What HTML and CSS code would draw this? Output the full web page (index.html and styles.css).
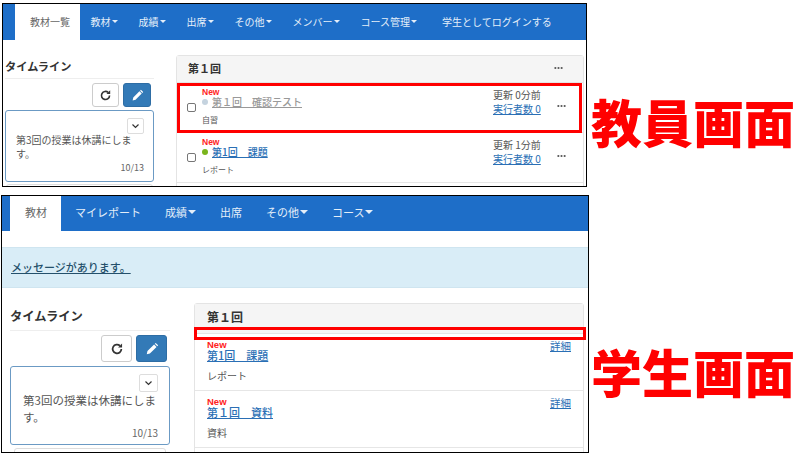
FILE: index.html
```html
<!DOCTYPE html>
<html lang="ja">
<head>
    <meta charset="UTF-8">
    <title>教員画面と学生画面</title>
    <link rel="stylesheet" href="styles.css">
</head>
<body>

    <!-- 教員画面 -->
    <div class="shot-row teacher-row">
        <div class="shot teacher">
            <nav class="navbar">
                <a class="tab active">教材一覧</a>
                <a class="tab">教材<i class="caret"></i></a>
                <a class="tab">成績<i class="caret"></i></a>
                <a class="tab">出席<i class="caret"></i></a>
                <a class="tab">その他<i class="caret"></i></a>
                <a class="tab">メンバー<i class="caret"></i></a>
                <a class="tab">コース管理<i class="caret"></i></a>
                <a class="tab login">学生としてログインする</a>
            </nav>
            <div class="layout">
                <aside class="sidebar">
                    <h2 class="side-title">タイムライン</h2>
                    <div class="side-btns">
                        <button class="btn">
                            <svg viewBox="0 0 16 16" class="btn-icon"><path d="M13 8a5 5 0 1 1-1.6-3.7" fill="none" stroke="#333" stroke-width="2"/><path d="M13.8 1.6v4.6H9.2z" fill="#333"/></svg>
                        </button>
                        <button class="btn btn-blue">
                            <svg viewBox="0 0 16 16" class="btn-icon"><path d="M2 14l.8-3.6 7.6-7.6 2.8 2.8-7.6 7.6zM11.2 2l1-1 2.8 2.8-1 1z" fill="#fff"/></svg>
                        </button>
                    </div>
                    <div class="note">
                        <div class="note-top">
                            <span class="chevron"><svg viewBox="0 0 12 8"><path d="M2 2l4 4 4-4" fill="none" stroke="#333" stroke-width="1.6"/></svg></span>
                        </div>
                        <p class="note-text">第3回の授業は休講にします。</p>
                        <div class="note-date">10/13</div>
                    </div>
                    <div class="note-next"></div>
                </aside>
                <main class="panel">
                    <div class="panel-head">
                        <span>第１回</span>
                        <svg viewBox="0 0 10 4" class="dots"><circle cx="1.5" cy="2" r="1.2"/><circle cx="5" cy="2" r="1.2"/><circle cx="8.5" cy="2" r="1.2"/></svg>
                    </div>
                    <div class="item">
                        <input type="checkbox" class="check">
                        <div class="item-main">
                            <div class="new">New</div>
                            <div class="item-title"><i class="dot dot-gray"></i><a class="title-off">第１回　確認テスト</a></div>
                            <div class="item-type">自習</div>
                        </div>
                        <div class="item-stat">
                            <div>更新 0分前</div>
                            <a>実行者数 0</a>
                        </div>
                        <svg viewBox="0 0 10 4" class="dots"><circle cx="1.5" cy="2" r="1.2"/><circle cx="5" cy="2" r="1.2"/><circle cx="8.5" cy="2" r="1.2"/></svg>
                    </div>
                    <div class="item">
                        <input type="checkbox" class="check">
                        <div class="item-main">
                            <div class="new">New</div>
                            <div class="item-title"><i class="dot dot-green"></i><a>第1回　課題</a></div>
                            <div class="item-type">レポート</div>
                        </div>
                        <div class="item-stat">
                            <div>更新 1分前</div>
                            <a>実行者数 0</a>
                        </div>
                        <svg viewBox="0 0 10 4" class="dots"><circle cx="1.5" cy="2" r="1.2"/><circle cx="5" cy="2" r="1.2"/><circle cx="8.5" cy="2" r="1.2"/></svg>
                    </div>
                </main>
            </div>
            <div class="red-box teacher-box"></div>
        </div>
        <div class="label">教員画面</div>
    </div>

    <!-- 学生画面 -->
    <div class="shot-row student-row">
        <div class="shot student">
            <nav class="navbar">
                <a class="tab active">教材</a>
                <a class="tab">マイレポート</a>
                <a class="tab">成績<i class="caret"></i></a>
                <a class="tab">出席</a>
                <a class="tab">その他<i class="caret"></i></a>
                <a class="tab">コース<i class="caret"></i></a>
            </nav>
            <div class="alert"><a>メッセージがあります。</a></div>
            <div class="layout">
                <aside class="sidebar">
                    <h2 class="side-title">タイムライン</h2>
                    <div class="side-btns">
                        <button class="btn">
                            <svg viewBox="0 0 16 16" class="btn-icon"><path d="M13 8a5 5 0 1 1-1.6-3.7" fill="none" stroke="#333" stroke-width="2"/><path d="M13.8 1.6v4.6H9.2z" fill="#333"/></svg>
                        </button>
                        <button class="btn btn-blue">
                            <svg viewBox="0 0 16 16" class="btn-icon"><path d="M2 14l.8-3.6 7.6-7.6 2.8 2.8-7.6 7.6zM11.2 2l1-1 2.8 2.8-1 1z" fill="#fff"/></svg>
                        </button>
                    </div>
                    <div class="note">
                        <div class="note-top">
                            <span class="chevron"><svg viewBox="0 0 12 8"><path d="M2 2l4 4 4-4" fill="none" stroke="#333" stroke-width="1.6"/></svg></span>
                        </div>
                        <p class="note-text">第3回の授業は休講にします。</p>
                        <div class="note-date">10/13</div>
                    </div>
                    <div class="note-next"></div>
                </aside>
                <main class="panel">
                    <div class="panel-head">
                        <span>第１回</span>
                    </div>
                    <div class="item">
                        <div class="item-main">
                            <div class="new">New</div>
                            <div class="item-title"><a>第1回　課題</a></div>
                            <div class="item-type">レポート</div>
                        </div>
                        <a class="detail">詳細</a>
                    </div>
                    <div class="item">
                        <div class="item-main">
                            <div class="new">New</div>
                            <div class="item-title"><a>第１回　資料</a></div>
                            <div class="item-type">資料</div>
                        </div>
                        <a class="detail">詳細</a>
                    </div>
                </main>
            </div>
            <div class="red-box student-box"></div>
        </div>
        <div class="label">学生画面</div>
    </div>

</body>
</html>
```

FILE: styles.css
```css
body {
    margin: 0;
    background-color: #fff;
    color: #555;
    font-family: "Noto Sans CJK JP", "Liberation Sans", sans-serif;
}
a {
    cursor: pointer;
}
p, h2 {
    margin: 0;
}

.shot-row {
    display: flex;
}
.teacher-row {
    padding: 3px 0 0 2px;
}
.student-row {
    padding: 8px 0 0 1px;
}
.shot {
    position: relative;
    box-sizing: border-box;
    border: 1px solid #000;
    overflow: hidden;
}
.teacher {
    width: 585px;
    height: 184px;
}
.student {
    width: 588px;
    height: 258px;
}
.label {
    color: #f00;
    font-size: 51px;
    font-weight: 900;
    line-height: 50px;
    white-space: nowrap;
}
.teacher-row .label {
    margin: 93px 0 0 4px;
}
.student-row .label {
    margin: 151px 0 0 2px;
}

/* ナビゲーション */
.navbar {
    display: flex;
    background-color: #1e6ec8;
    color: #e4eef9;
}
.tab {
    display: flex;
    align-items: center;
    white-space: nowrap;
}
.tab.active {
    background-color: #fff;
    color: #666;
}
.caret {
    width: 0;
    height: 0;
    margin-left: 1px;
    border-top: 3px solid #e4eef9;
    border-left: 3px solid transparent;
    border-right: 3px solid transparent;
}
.teacher .navbar {
    height: 36px;
    padding-left: 12px;
    font-size: 10px;
}
.teacher .tab {
    padding: 0 10.5px 2px;
}
.teacher .tab.active {
    padding: 0 10px 2px 15px;
}
.teacher .tab.login {
    margin-left: 4px;
}
.student .navbar {
    height: 35px;
    padding-left: 8px;
    font-size: 11px;
}
.student .tab {
    padding: 0 12px 4px;
}
.student .tab.active {
    padding: 0 14px 4px 15px;
    margin-right: 2px;
}
.student .caret {
    border-top-width: 4px;
    border-left-width: 4px;
    border-right-width: 4px;
}

.alert {
    box-sizing: border-box;
    height: 41px;
    margin-top: 16px;
    padding-left: 9px;
    background-color: #d9edf7;
    border-top: 1px solid #cfe5f0;
    border-bottom: 1px solid #cfe5f0;
    color: #24506b;
    font-size: 11px;
    font-weight: 500;
    line-height: 38px;
}
.alert a {
    text-decoration: underline;
}

.layout {
    display: flex;
    padding-top: 15px;
}

/* タイムライン */
.side-title {
    box-sizing: border-box;
    border-bottom: 1px solid #eee;
    color: #333;
    font-weight: 700;
}
.side-btns {
    display: flex;
    justify-content: flex-end;
    gap: 4px;
}
.btn {
    display: flex;
    align-items: center;
    justify-content: center;
    padding: 0;
    background-color: #fff;
    border: 1px solid #ccc;
    border-radius: 3px;
}
.btn-blue {
    background-color: #337ab7;
    border-color: #2e6da4;
}
.note {
    box-sizing: border-box;
    border: 1px solid #6b9ac4;
    border-radius: 3px;
}
.note-top {
    display: flex;
    justify-content: flex-end;
}
.chevron {
    display: flex;
    align-items: center;
    justify-content: center;
    box-sizing: border-box;
    border: 1px solid #ddd;
    border-radius: 2px;
}
.chevron svg {
    width: 9px;
    height: 6px;
}
.note-date {
    color: #666;
    text-align: right;
}
.note-next {
    border: 1px solid #ddd;
    border-radius: 3px;
}

.teacher .sidebar {
    flex: 0 0 173px;
    box-sizing: border-box;
    padding-left: 2px;
    padding-right: 22px;
}
.teacher .side-title {
    height: 24px;
    font-size: 11.2px;
    line-height: 23px;
}
.teacher .side-btns {
    margin-top: 4px;
    padding-right: 3px;
}
.teacher .btn {
    width: 27px;
    height: 24px;
}
.teacher .btn-blue {
    width: 28px;
}
.teacher .btn-icon {
    width: 13px;
    height: 13px;
}
.teacher .note {
    height: 72px;
    margin-top: 3px;
    padding: 7px 9px 0 10px;
    font-size: 10px;
}
.teacher .chevron {
    width: 17px;
    height: 16px;
}
.teacher .note-text {
    line-height: 14px;
    margin-top: -1px;
}
.teacher .note-date {
    font-size: 9px;
    line-height: 12px;
    margin-top: 1px;
}
.teacher .note-next {
    height: 20px;
    margin: 2px 1px 0 1px;
}

.student .sidebar {
    flex: 0 0 192px;
    box-sizing: border-box;
    padding-left: 8px;
    padding-right: 24px;
}
.student .side-title {
    height: 28px;
    font-size: 12.3px;
    line-height: 26px;
}
.student .side-btns {
    margin-top: 4px;
    padding-right: 3px;
}
.student .btn {
    width: 31px;
    height: 27px;
}
.student .btn-icon {
    width: 14px;
    height: 14px;
}
.student .note {
    height: 79px;
    margin-top: 4px;
    padding: 7px 11px 0 12px;
    font-size: 11.5px;
}
.student .chevron {
    width: 19px;
    height: 18px;
}
.student .note-text {
    line-height: 17px;
}
.student .note-date {
    font-size: 10px;
    line-height: 12px;
    margin-top: 1px;
}
.student .note-next {
    height: 20px;
    margin: 3px 4px 0 4px;
}

/* 教材パネル */
.panel {
    box-sizing: border-box;
    border: 1px solid #e4e4e4;
    border-radius: 3px 3px 0 0;
}
.teacher .panel {
    width: 408px;
}
.student .panel {
    width: 390px;
}
.panel-head {
    display: flex;
    align-items: center;
    justify-content: space-between;
    background-color: #f5f5f5;
    border-bottom: 1px solid #e4e4e4;
    color: #333;
    font-weight: 700;
}
.teacher .panel-head {
    box-sizing: border-box;
    height: 27px;
    padding: 0 20px 2px 11px;
    font-size: 11px;
}
.student .panel-head {
    box-sizing: border-box;
    height: 30px;
    padding: 0 0 4px 12px;
    font-size: 12px;
}
.dots {
    width: 9px;
    height: 4px;
    fill: #555;
}
.item {
    display: flex;
    align-items: flex-start;
    box-sizing: border-box;
    border-bottom: 1px solid #e6e6e6;
}
.teacher .item {
    height: 50px;
    padding-left: 10px;
}
.student .item {
    height: 57px;
    padding-left: 12px;
}
.check {
    appearance: none;
    box-sizing: border-box;
    width: 9px;
    height: 9px;
    margin: 20px 6px 0 0;
    background-color: #fff;
    border: 1px solid #767676;
    border-radius: 2px;
}
.item-main {
    flex: 1;
}
.new {
    color: #f22;
    font-family: "Liberation Sans", sans-serif;
    font-weight: 700;
}
.item-title a {
    color: #2a6fb5;
    font-weight: 500;
    text-decoration: underline;
}
.item-title a.title-off {
    color: #999;
}
.dot {
    display: inline-block;
    width: 6px;
    height: 6px;
    margin-right: 4px;
    border-radius: 50%;
    vertical-align: 1px;
}
.dot-gray {
    background-color: #c5d3df;
}
.dot-green {
    background-color: #7ab51d;
}
.teacher .item-main {
    padding-top: 5px;
}
.teacher .new {
    font-size: 8.5px;
    line-height: 9px;
}
.teacher .item-title {
    margin-top: -1px;
    font-size: 10px;
    line-height: 11px;
}
.teacher .item-type {
    margin-top: 7px;
    font-size: 8px;
    line-height: 12px;
}
.student .item-main {
    padding-top: 6px;
}
.student .new {
    font-size: 9.5px;
    line-height: 10px;
}
.student .item-title {
    font-size: 11px;
    line-height: 11px;
}
.student .item-type {
    margin-top: 8px;
    font-size: 10px;
    line-height: 14px;
}
.item-stat {
    width: 64px;
    margin-top: 5px;
    font-size: 10px;
    line-height: 14px;
}
.item-stat a {
    color: #2a6fb5;
    text-decoration: underline;
}
.teacher .item .dots {
    margin: 21px 17px 0 0;
}
.detail {
    margin: 6px 12px 0 0;
    color: #2a6fb5;
    font-size: 10.5px;
    line-height: 12px;
    text-decoration: underline;
}

/* 赤枠 */
.red-box {
    position: absolute;
    box-sizing: border-box;
    border: 3px solid #f00;
}
.teacher-box {
    left: 174px;
    top: 79px;
    width: 405px;
    height: 50px;
}
.student-box {
    left: 192px;
    top: 131px;
    width: 392px;
    height: 13px;
}
```
